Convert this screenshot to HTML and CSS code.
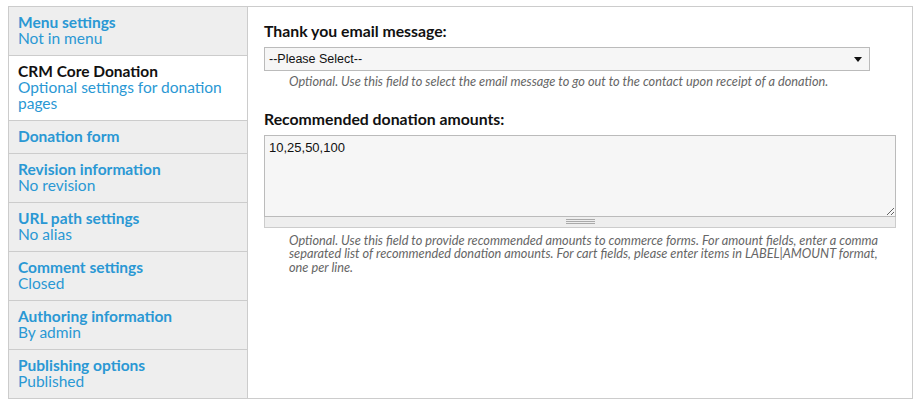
FILE: index.html
```html
<!DOCTYPE html>
<html>
<head>
<meta charset="utf-8">
<link rel="stylesheet" href="styles.css">
</head>
<body>
<div class="vtabs">
  <ul class="tab-list">
    <li class="tab"><a class="tab-title">Menu settings</a><span class="tab-summary">Not in menu</span></li>
    <li class="tab active"><a class="tab-title">CRM Core Donation</a><span class="tab-summary">Optional settings for donation pages</span></li>
    <li class="tab"><a class="tab-title">Donation form</a></li>
    <li class="tab"><a class="tab-title">Revision information</a><span class="tab-summary">No revision</span></li>
    <li class="tab"><a class="tab-title">URL path settings</a><span class="tab-summary">No alias</span></li>
    <li class="tab"><a class="tab-title">Comment settings</a><span class="tab-summary">Closed</span></li>
    <li class="tab"><a class="tab-title">Authoring information</a><span class="tab-summary">By admin</span></li>
    <li class="tab last"><a class="tab-title">Publishing options</a><span class="tab-summary">Published</span></li>
  </ul>
  <div class="pane">
    <div class="form-item">
      <label class="label">Thank you email message:</label>
      <div class="select">--Please Select--<span class="arrow"></span></div>
      <div class="description">Optional. Use this field to select the email message to go out to the contact upon receipt of a donation.</div>
    </div>
    <div class="form-item">
      <label class="label">Recommended donation amounts:</label>
      <div class="textarea-wrap">
        <textarea class="textarea">10,25,50,100</textarea>
        <div class="grippie"><span class="grip"></span></div>
      </div>
      <div class="description">Optional. Use this field to provide recommended amounts to commerce forms. For amount fields, enter a comma separated list of recommended donation amounts. For cart fields, please enter items in LABEL|AMOUNT format, one per line.</div>
    </div>
  </div>
</div>
</body>
</html>
```
FILE: styles.css
```css
html, body {
  margin: 0;
  padding: 0;
  background: #fff;
}
body {
  padding: 6px 8px 0 8px;
  font-family: Lato, "Open Sans", sans-serif;
}
.vtabs {
  display: flex;
  width: 903px;
  height: 391px;
  border: 1px solid #ccc;
}
.tab-list {
  list-style: none;
  margin: 0;
  padding: 0;
  width: 238px;
  flex: none;
  background: #eee;
  border-right: 1px solid #ccc;
}
.tab {
  display: flex;
  flex-direction: column;
  padding: 7px 9px 9px 9px;
  border-bottom: 1px solid #ccc;
  font-size: 15.5px;
  line-height: 16px;
}
.tab.last {
  border-bottom: none;
}
.tab.active {
  background: #fff;
}
.tab-title {
  color: #2a98d4;
  font-weight: bold;
}
.tab.active .tab-title {
  color: #111;
}
.tab-summary {
  color: #2a98d4;
}
.pane {
  flex: 1;
  padding: 15px 16px 0 16px;
}
.form-item {
  margin-bottom: 21px;
}
.label {
  display: block;
  font-weight: bold;
  font-size: 15.8px;
  line-height: 18px;
  color: #111;
  margin-bottom: 7px;
}
.select {
  position: relative;
  box-sizing: border-box;
  width: 606px;
  height: 24px;
  border: 1px solid #bbb;
  background: #f6f6f6;
  font-family: "Liberation Sans", Arial, sans-serif;
  font-size: 12.5px;
  line-height: 22px;
  padding-left: 4px;
  color: #111;
}
.arrow {
  position: absolute;
  right: 7px;
  top: 9px;
  width: 0;
  height: 0;
  border-left: 4px solid transparent;
  border-right: 4px solid transparent;
  border-top: 5px solid #111;
}
.description {
  margin: 4px 0 0 25px;
  font-style: italic;
  font-size: 12.75px;
  line-height: 13.5px;
  color: #666;
}
.textarea-wrap {
  width: 632px;
  margin-bottom: 6px;
}
.textarea {
  display: block;
  box-sizing: border-box;
  width: 632px;
  height: 82px;
  margin: 0;
  border: 1px solid #bbb;
  background: #f6f6f6;
  font-family: "Liberation Sans", Arial, sans-serif;
  font-size: 13px;
  line-height: 15px;
  padding: 4px 4px 3px 4px;
  color: #111;
  resize: vertical;
}
.grippie {
  box-sizing: border-box;
  height: 11px;
  background: #eee;
  border: 1px solid #ccc;
  border-top: none;
  display: flex;
  justify-content: center;
  align-items: center;
}
.grip {
  width: 29px;
  height: 5px;
  border-top: 1px solid #aaa;
  border-bottom: 1px solid #aaa;
  box-sizing: border-box;
  position: relative;
}
.grip::after {
  content: "";
  position: absolute;
  left: 0;
  right: 0;
  top: 1px;
  border-top: 1px solid #aaa;
}
```
